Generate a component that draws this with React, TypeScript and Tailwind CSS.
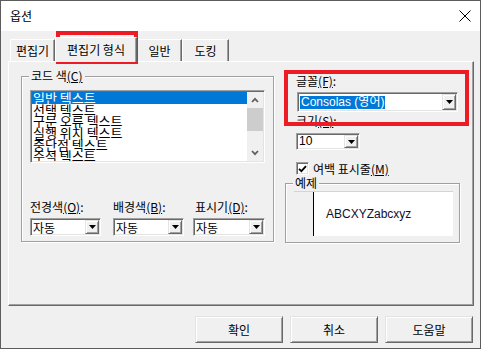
import React from 'react';

const sunken =
  'border border-t-[#a0a0a0] border-l-[#a0a0a0] border-r-white border-b-white shadow-[inset_1px_1px_0_#696969,inset_-1px_-1px_0_#e3e3e3]';
const raised =
  'border border-t-[#e3e3e3] border-l-[#e3e3e3] border-r-[#696969] border-b-[#696969] shadow-[inset_1px_1px_0_#ffffff,inset_-1px_-1px_0_#a0a0a0]';

function DropButton({ className = '' }: { className?: string }) {
  return (
    <div className={`flex items-center justify-center bg-[#f0f0f0] ${raised} ${className}`}>
      <svg width="7" height="4" viewBox="0 0 7 4">
        <path d="M0 0h7L3.5 4z" fill="#000" />
      </svg>
    </div>
  );
}

function Combo({ className, children }: { className: string; children: React.ReactNode }) {
  return (
    <div className={`flex items-stretch bg-white p-[1px] leading-[13px] ${sunken} ${className}`}>
      <div className="flex-1 flex items-center overflow-hidden pl-[1px]">{children}</div>
      <DropButton className="w-[14px]" />
    </div>
  );
}

function Label({ text, hot, rest }: { text: string; hot: string; rest: string }) {
  return (
    <span className="leading-[14px] whitespace-nowrap">
      {text}
      <span className="underline">{hot}</span>
      {rest}
    </span>
  );
}

function GroupBox({ title, className, children }: { title: React.ReactNode; className: string; children?: React.ReactNode }) {
  return (
    <div className={`relative border border-[#a0a0a0] shadow-[1px_1px_0_#ffffff,inset_1px_1px_0_#ffffff] ${className}`}>
      <span className="absolute -top-[8px] left-[7px] px-[2px] bg-[#f0f0f0] leading-[14px]">{title}</span>
      {children}
    </div>
  );
}

const items = ['일반 텍스트', '선택 텍스트', '구문 오류 텍스트', '실행 위치 텍스트', '중단점 텍스트', '주석 텍스트'];

function Chevron({ up }: { up?: boolean }) {
  return (
    <svg width="8" height="6" viewBox="0 0 8 6">
      <path d={up ? 'M1 5L4 1.8L7 5' : 'M1 1L4 4.2L7 1'} fill="none" stroke="#606060" strokeWidth="1.8" />
    </svg>
  );
}

function Tab({ label, className = '' }: { label: string; className?: string }) {
  return (
    <div
      className={`h-[22px] flex items-center justify-center border-l border-t border-r border-l-white border-t-white border-r-[#696969] shadow-[inset_-1px_0_0_#a0a0a0] ${className}`}
    >
      {label}
    </div>
  );
}

function PushButton({ label }: { label: string }) {
  return (
    <button className={`w-[88px] h-[27px] flex items-center justify-center bg-[#f0f0f0] ${raised}`}>{label}</button>
  );
}

export default function App() {
  return (
    <div className="relative w-[481px] h-[349px] flex flex-col bg-[#f0f0f0] border border-[#5c5c5c] text-[12px] text-black font-['Noto_Sans_CJK_KR','Noto_Sans',sans-serif]">
      {/* Title bar */}
      <div className="h-[30px] flex items-center justify-between bg-white pl-[9px] pr-[9px]">
        <span className="leading-[14px]">옵션</span>
        <svg width="12" height="12" viewBox="0 0 12 12">
          <path d="M0.5 0.5L11.5 11.5M11.5 0.5L0.5 11.5" stroke="#000" strokeWidth="1" />
        </svg>
      </div>

      <div className="flex flex-col px-[7px]">
        {/* Tabs */}
        <div className="mt-[6px] h-[24px] flex items-end pl-[2px]">
          <Tab label="편집기" className="w-[45px]" />
          <div className="relative z-10 -mb-[1px] w-[82px] h-[25px] flex items-center justify-center bg-[#f0f0f0] border-l border-t border-r border-l-white border-t-white border-r-[#696969] shadow-[inset_-1px_0_0_#a0a0a0]">
            편집기 형식
          </div>
          <Tab label="일반" className="w-[45px]" />
          <Tab label="도킹" className="w-[47px]" />
        </div>

        {/* Panel */}
        <div className="w-[466px] h-[245px] flex items-start border border-l-white border-t-white border-r-[#696969] border-b-[#696969] shadow-[inset_-1px_-1px_0_#a0a0a0]">
          <GroupBox
            className="ml-[12px] mt-[14px] w-[253px] h-[166px] flex flex-col"
            title={<Label text="코드 색" hot="(C)" rest="" />}
          >
            <div className={`ml-[8px] mt-[13px] w-[235px] h-[73px] flex bg-white p-[1px] ${sunken}`}>
              <div className="flex-1 overflow-hidden text-[13px]">
                {items.map((t, i) => (
                  <div
                    key={t}
                    className={`h-[11.7px] leading-[11.7px] pl-[1px] whitespace-nowrap ${i === 0 ? 'bg-[#0078d7] text-white' : ''}`}
                  >
                    {t}
                  </div>
                ))}
              </div>
              <div className="w-[16px] flex flex-col bg-[#f0f0f0]">
                <div className="h-[16px] flex items-center justify-center">
                  <Chevron up />
                </div>
                <div className="h-[23px] bg-[#cdcdcd]" />
                <div className="flex-1" />
                <div className="h-[16px] flex items-center justify-center">
                  <Chevron />
                </div>
              </div>
            </div>
            <div className="mt-[37px] ml-[8px] flex leading-[14px]">
              <div className="w-[83px] flex flex-col gap-[4px]">
                <Label text="전경색" hot="(O)" rest=":" />
                <Combo className="w-[71px] h-[18px]">자동</Combo>
              </div>
              <div className="w-[80px] flex flex-col gap-[4px]">
                <Label text="배경색" hot="(B)" rest=":" />
                <Combo className="w-[71px] h-[18px]">자동</Combo>
              </div>
              <div className="w-[72px] flex flex-col gap-[4px]">
                <span className="pl-[2px] leading-[14px]">
                  <Label text="표시기" hot="(D)" rest=":" />
                </span>
                <Combo className="w-[72px] h-[18px]">자동</Combo>
              </div>
            </div>
          </GroupBox>

          <div className="ml-[11px] mt-[12px] w-[175px] flex flex-col leading-[14px]">
            <div className="pl-[11px] h-[14px]">
              <Label text="글꼴" hot="(F)" rest=":" />
            </div>
            <Combo className="ml-[12px] mt-[4px] w-[161px] h-[20px]">
              <span className="leading-[13px] px-[1px] bg-[#0078d7] text-white font-['Liberation_Sans','Noto_Sans_CJK_KR',sans-serif]">
                Consolas (영어)
              </span>
            </Combo>
            <div className="pl-[11px] mt-[2px] h-[14px]">
              <Label text="크기" hot="(S)" rest=":" />
            </div>
            <Combo className="ml-[11px] mt-[5px] w-[64px] h-[17px]">
              <span className="leading-[13px] font-['Liberation_Sans',sans-serif]">10</span>
            </Combo>
            <div className="ml-[11px] mt-[12px] h-[13px] flex items-center gap-[4px]">
              <div className={`w-[13px] h-[13px] flex items-center justify-center bg-white ${sunken}`}>
                <svg width="9" height="8" viewBox="0 0 9 8">
                  <path d="M1 3.8L3.4 6.2L8 1.2" fill="none" stroke="#000" strokeWidth="1.8" />
                </svg>
              </div>
              <Label text="여백 표시줄" hot="(M)" rest="" />
            </div>
            <GroupBox className="mt-[8px] w-[175px] h-[60px]" title="예제">
              <div className="ml-[8px] mt-[7px] w-[159px] h-[45px] flex border-t border-[#d4d4d4] bg-white">
                <div className="w-[20px] bg-[#f0f0f0] border-r border-black" />
                <div className="flex-1 flex items-center pl-[12px] text-[12px] font-['Liberation_Sans',sans-serif] text-[#101030]">
                  ABCXYZabcxyz
                </div>
              </div>
            </GroupBox>
          </div>
        </div>

        {/* Buttons */}
        <div className="mt-[10px] flex justify-end gap-[7px]">
          <PushButton label="확인" />
          <PushButton label="취소" />
          <PushButton label="도움말" />
        </div>
      </div>

      {/* Red annotation boxes */}
      <div className="absolute left-[55px] top-[30px] w-[82px] h-[33px] border-4 border-[#ed1c24] pointer-events-none" />
      <div className="absolute left-[283px] top-[69px] w-[185px] h-[56px] border-4 border-[#ed1c24] pointer-events-none" />
    </div>
  );
}
